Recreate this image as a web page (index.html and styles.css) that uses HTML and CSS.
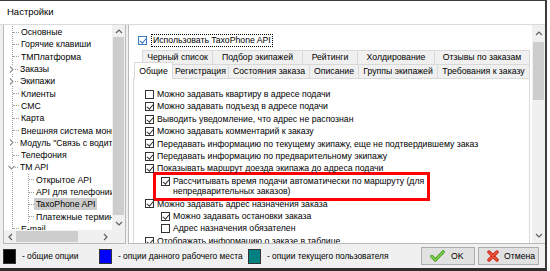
FILE: index.html
```html
<!DOCTYPE html>
<html lang="ru">

<head>
    <meta charset="UTF-8">
    <meta name="viewport" content="width=device-width, initial-scale=1.0">
    <title>Настройки</title>

    <link rel="stylesheet" href="styles.css">
</head>

<body>
    <div class="window">
        <div class="titlebar">Настройки</div>

        <div class="body">
            <!-- tree of sections -->
            <div class="tree-panel">
                <div class="tree-view">
                    <div class="tree-list">
                        <div class="tree-root">
                            <div class="node"><span class="ln"></span><span class="label">Основные</span></div>
                            <div class="node"><span class="ln"></span><span class="label">Горячие клавиши</span></div>
                            <div class="node"><span class="ln"></span><span class="label">ТМПлатформа</span></div>
                            <div class="node parent">
                                <svg class="twist" width="7" height="9" viewBox="0 0 7 9"><polyline points="2,1.5 5,4.5 2,7.5" /></svg>
                                <span class="ln short"></span><span class="label">Заказы</span>
                            </div>
                            <div class="node parent">
                                <svg class="twist" width="7" height="9" viewBox="0 0 7 9"><polyline points="2,1.5 5,4.5 2,7.5" /></svg>
                                <span class="ln short"></span><span class="label">Экипажи</span>
                            </div>
                            <div class="node"><span class="ln"></span><span class="label">Клиенты</span></div>
                            <div class="node"><span class="ln"></span><span class="label">СМС</span></div>
                            <div class="node"><span class="ln"></span><span class="label">Карта</span></div>
                            <div class="node"><span class="ln"></span><span class="label">Внешняя система мониторинга</span></div>
                            <div class="node parent">
                                <svg class="twist" width="7" height="9" viewBox="0 0 7 9"><polyline points="2,1.5 5,4.5 2,7.5" /></svg>
                                <span class="ln short"></span><span class="label">Модуль "Связь с водителем"</span>
                            </div>
                            <div class="node"><span class="ln"></span><span class="label">Телефония</span></div>
                            <div class="node parent">
                                <svg class="twist" width="7" height="9" viewBox="0 0 7 9"><polyline points="0.5,3 3.5,6 6.5,3" /></svg>
                                <span class="ln short"></span><span class="label">TM API</span>
                            </div>
                            <div class="children">
                                <div class="node"><span class="ln"></span><span class="label">Открытое API</span></div>
                                <div class="node"><span class="ln"></span><span class="label">API для телефонии</span></div>
                                <div class="node selected"><span class="ln"></span><span class="label">TaxoPhone API</span></div>
                                <div class="node"><span class="ln"></span><span class="label">Платежные терминалы</span></div>
                            </div>
                            <div class="node"><span class="ln"></span><span class="label">E-mail</span></div>
                        </div>
                    </div>
                    <div class="vscroll">
                        <div class="arrow up">
                            <svg width="8" height="6" viewBox="0 0 8 6"><polyline points="1,5 4,2 7,5" /></svg>
                        </div>
                        <div class="thumb tree-thumb"></div>
                        <div class="track"></div>
                        <div class="arrow down">
                            <svg width="8" height="6" viewBox="0 0 8 6"><polyline points="1,1 4,4 7,1" /></svg>
                        </div>
                    </div>
                </div>
                <div class="hscroll">
                    <div class="arrow">
                        <svg width="6" height="8" viewBox="0 0 6 8"><polyline points="5,1 2,4 5,7" /></svg>
                    </div>
                    <div class="hthumb"></div>
                    <div class="track"></div>
                    <div class="arrow">
                        <svg width="6" height="8" viewBox="0 0 6 8"><polyline points="1,1 4,4 1,7" /></svg>
                    </div>
                    <div class="corner"></div>
                </div>
            </div>

            <!-- settings of the selected section -->
            <div class="main-panel">
                <div class="main-scroll">
                    <div class="use-api">
                        <span class="cb on focus"></span>
                        <span class="focus-text">Использовать TaxoPhone API</span>
                    </div>

                    <div class="tabs">
                        <div class="tab-row back">
                            <div class="tab">Черный список</div>
                            <div class="tab">Подбор экипажей</div>
                            <div class="tab">Рейтинги</div>
                            <div class="tab">Холдирование</div>
                            <div class="tab">Отзывы по заказам</div>
                        </div>
                        <div class="tab-row front">
                            <div class="tab active">Общие</div>
                            <div class="tab">Регистрация</div>
                            <div class="tab">Состояния заказа</div>
                            <div class="tab">Описание</div>
                            <div class="tab">Группы экипажей</div>
                            <div class="tab">Требования к заказу</div>
                        </div>

                        <div class="page">
                            <div class="opt"><span class="cb"></span>Можно задавать квартиру в адресе подачи</div>
                            <div class="opt"><span class="cb on"></span>Можно задавать подъезд в адресе подачи</div>
                            <div class="opt"><span class="cb on"></span>Выводить уведомление, что адрес не распознан</div>
                            <div class="opt"><span class="cb on"></span>Можно задавать комментарий к заказу</div>
                            <div class="opt"><span class="cb on"></span>Передавать информацию по текущему экипажу, еще не подтвердившему заказ</div>
                            <div class="opt"><span class="cb on"></span>Передавать информацию по предварительному экипажу</div>
                            <div class="opt"><span class="cb on"></span>Показывать маршрут доезда экипажа до адреса подачи</div>
                            <div class="hl">
                                <div class="opt"><span class="cb on"></span><span>Рассчитывать время подачи автоматически по маршруту (для<br>непредварительных заказов)</span></div>
                            </div>
                            <div class="opt"><span class="cb on"></span>Можно задавать адрес назначения заказа</div>
                            <div class="opt sub"><span class="cb on"></span>Можно задавать остановки заказа</div>
                            <div class="opt sub"><span class="cb"></span>Адрес назначения обязателен</div>
                            <div class="opt"><span class="cb on"></span>Отображать информацию о заказе в таблице</div>
                        </div>
                    </div>
                </div>
                <div class="vscroll main-vs">
                    <div class="arrow up">
                        <svg width="8" height="6" viewBox="0 0 8 6"><polyline points="1,5 4,2 7,5" /></svg>
                    </div>
                    <div class="thumb main-thumb"></div>
                    <div class="track"></div>
                    <div class="arrow down">
                        <svg width="8" height="6" viewBox="0 0 8 6"><polyline points="1,1 4,4 7,1" /></svg>
                    </div>
                </div>
            </div>
        </div>

        <div class="legend">
            <div class="legend-item common"><span class="swatch black"></span>- общие опции</div>
            <div class="legend-item local"><span class="swatch blue"></span>- опции данного рабочего места</div>
            <div class="legend-item"><span class="swatch teal"></span>- опции текущего пользователя</div>

            <div class="buttons">
                <button class="btn ok">
                    <svg width="15" height="12" viewBox="0 0 15 12">
                        <path d="M1.8 6.4 L5.4 10 L13.2 1.8" fill="none" stroke="#3f9a1e" stroke-width="3.2" stroke-linecap="round" stroke-linejoin="round" />
                        <path d="M1.8 6.4 L5.4 10 L13.2 1.8" fill="none" stroke="#7fd04a" stroke-width="1.6" stroke-linecap="round" stroke-linejoin="round" />
                    </svg>
                    OK
                </button>
                <button class="btn cancel">
                    <svg width="12" height="12" viewBox="0 0 12 12">
                        <path d="M2 2 L10 10 M10 2 L2 10" fill="none" stroke="#c8231a" stroke-width="3.4" stroke-linecap="round" />
                        <path d="M2 2 L10 10 M10 2 L2 10" fill="none" stroke="#f05a3c" stroke-width="1.6" stroke-linecap="round" />
                    </svg>
                    Отмена
                </button>
            </div>
        </div>
    </div>
</body>

</html>
```

FILE: styles.css
```css
* {
    box-sizing: border-box;
}

body {
    margin: 0;
    background: #fff;
    font-family: "Liberation Sans", Arial, sans-serif;
    font-size: 8.7px;
    color: #000;
}

.window {
    width: 547px;
    height: 271px;
    display: flex;
    flex-direction: column;
    background: #f0f0f0;
    border-top: 1px solid #3c3c3c;
    border-right: 2px solid #3c3c3c;
    border-bottom: 3px solid #2e2e2e;
}

.titlebar {
    flex: none;
    height: 24px;
    padding-left: 7px;
    line-height: 22px;
    font-size: 9.5px;
    background: #fff;
    border-bottom: 1px solid #dadada;
}

.body {
    flex: none;
    height: 219px;
    display: flex;
    gap: 2px;
    padding-left: 3px;
}

/* tree */
.tree-panel {
    width: 123px;
    display: flex;
    flex-direction: column;
    background: #fff;
    border: 1px solid #b9b9b9;
    border-top: 0;
}

.tree-view {
    flex: 1;
    min-height: 0;
    display: flex;
}

.tree-list {
    flex: 1;
    overflow: hidden;
    padding-top: 1px;
    white-space: nowrap;
}

.tree-root {
    margin-left: 8px;
    border-left: 1px dotted #a0a0a0;
}

.node {
    display: flex;
    align-items: center;
    height: 12.3px;
}

.ln {
    flex: none;
    width: 6px;
    border-top: 1px dotted #a0a0a0;
}

.ln.short {
    width: 3px;
}

.label {
    padding: 0 2px;
    line-height: 12px;
}

.twist {
    flex: none;
    margin-left: -5px;
    background: #fff;
}

.twist polyline {
    fill: none;
    stroke: #8c8c8c;
    stroke-width: 1.1;
}

.children {
    margin-left: 15px;
    border-left: 1px dotted #a0a0a0;
}

.children .ln {
    width: 5px;
}

.node.selected .label {
    background: #cccccc;
}

/* scrollbars */
.vscroll {
    flex: none;
    width: 13px;
    display: flex;
    flex-direction: column;
    background: #f0f0f0;
}

.arrow {
    flex: none;
    display: flex;
    align-items: center;
    justify-content: center;
}

.arrow polyline {
    fill: none;
    stroke: #606060;
    stroke-width: 1.2;
}

.vscroll .arrow {
    height: 12px;
}

.thumb {
    flex: none;
    margin: 0 1px;
    background: #cdcdcd;
}

.tree-thumb {
    height: 178px;
}

.track {
    flex: 1;
}

.vscroll .arrow.down {
    height: 13px;
}

.hscroll {
    flex: none;
    height: 13px;
    display: flex;
    background: #f0f0f0;
}

.hscroll .arrow {
    width: 12px;
}

.hthumb {
    width: 62px;
    margin: 1px 0;
    background: #cdcdcd;
}

.corner {
    width: 13px;
}

/* right panel */
.main-panel {
    flex: 1;
    display: flex;
    background: #fff;
    border-left: 1px solid #b9b9b9;
    border-bottom: 1px solid #b9b9b9;
}

.main-scroll {
    flex: 1;
    overflow: hidden;
    padding-left: 4px;
}

.main-vs .arrow.up {
    height: 16px;
}

.main-thumb {
    height: 58px;
    margin-top: 1px;
}

.main-vs .arrow.down {
    height: 14px;
}

.cb {
    flex: none;
    position: relative;
    width: 9px;
    height: 9px;
    background: #fff;
    border: 1px solid #333;
}

.cb.on::after {
    content: "";
    position: absolute;
    left: 2.2px;
    top: 0;
    width: 2.6px;
    height: 5px;
    border: solid #333;
    border-width: 0 1px 1px 0;
    transform: rotate(40deg);
}

.cb.focus {
    border-color: #3b79c9;
}

.cb.focus::after {
    border-color: #2a6ac8;
}

.use-api {
    display: flex;
    align-items: center;
    gap: 4px;
    height: 13px;
    margin: 9px 0 0 5px;
}

.focus-text {
    padding: 0 1px;
    line-height: 11px;
    border: 1px dotted #000;
}

.tabs {
    width: 397px;
    margin-top: 3px;
}

.tab-row {
    display: flex;
    height: 14px;
}

.tab-row.back {
    margin-left: 9px;
}

.tab-row.front {
    margin-left: 1px;
}

.tab {
    flex: none;
    height: 14px;
    margin-right: -1px;
    line-height: 13px;
    text-align: center;
    white-space: nowrap;
    overflow: hidden;
    background: #f0f0f0;
    border: 1px solid #d9d9d9;
    border-bottom: 0;
}

/* tab widths follow the justified rows of the dialog */
.back .tab:nth-child(1) { width: 71px; }
.back .tab:nth-child(2) { width: 91px; }
.back .tab:nth-child(3) { width: 56px; }
.back .tab:nth-child(4) { width: 78px; }
.back .tab:nth-child(5) { width: 96px; }

.front .tab:nth-child(1) { width: 39px; }
.front .tab:nth-child(2) { width: 57px; }
.front .tab:nth-child(3) { width: 82px; }
.front .tab:nth-child(4) { width: 50px; }
.front .tab:nth-child(5) { width: 80px; }
.front .tab:nth-child(6) { width: 93px; }

.tab.active {
    position: relative;
    z-index: 1;
    height: 17px;
    margin-top: -2px;
    line-height: 16px;
    background: #fff;
}

.page {
    height: 200px;
    padding: 9px 0 0 11px;
    background: #fff;
    border: 1px solid #d9d9d9;
}

.opt {
    display: flex;
    align-items: flex-start;
    gap: 3px;
    padding: 1px 0;
    line-height: 10.4px;
    white-space: nowrap;
}

.opt .cb {
    margin-top: 0.7px;
}

.opt.sub {
    margin-left: 16px;
}

.hl {
    width: 277px;
    margin: -3px 0 -3px 8px;
    padding-left: 5px;
    border: 3px solid #ff0000;
}

/* bottom legend and buttons */
.legend {
    flex: none;
    height: 24px;
    display: flex;
    align-items: center;
    padding-left: 3px;
    font-size: 8.4px;
}

.legend-item {
    display: flex;
    align-items: center;
    gap: 6px;
    white-space: nowrap;
}

.legend-item.common {
    width: 96px;
}

.legend-item.local {
    width: 149px;
}

.swatch {
    width: 13px;
    height: 15px;
    border: 1px solid #333;
}

.swatch.black {
    background: #000;
}

.swatch.blue {
    background: #0000ff;
}

.swatch.teal {
    background: #008080;
}

.buttons {
    display: flex;
    gap: 3px;
    margin-left: auto;
    margin-right: 6px;
}

.btn {
    height: 18px;
    display: flex;
    align-items: center;
    gap: 6px;
    padding: 0 0 0 8px;
    font: inherit;
    font-size: 8.7px;
    color: #000;
    background: #e1e1e1;
    border: 1px solid #adadad;
}

.btn.ok {
    width: 54px;
}

.btn.cancel {
    width: 61px;
    gap: 5px;
}
```
